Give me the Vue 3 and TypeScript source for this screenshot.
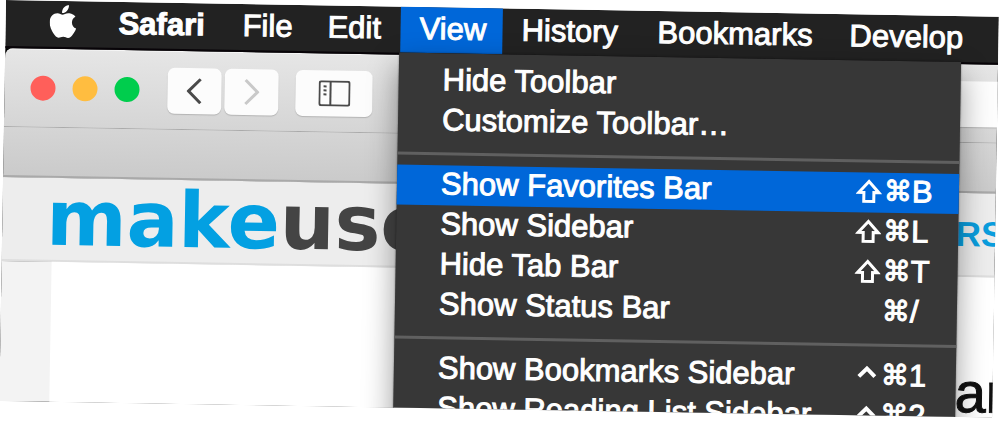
<script setup lang="ts">
interface MenuEntry {
  label: string
  mod?: 'shift' | 'control'
  key?: string
  active?: boolean
}

const leftTitles: string[] = ['Safari', 'File', 'Edit']
const rightTitles: string[] = ['History', 'Bookmarks', 'Develop']

const groups: MenuEntry[][] = [
  [{ label: 'Hide Toolbar' }, { label: 'Customize Toolbar…' }],
  [
    { label: 'Show Favorites Bar', mod: 'shift', key: 'B', active: true },
    { label: 'Show Sidebar', mod: 'shift', key: 'L' },
    { label: 'Hide Tab Bar', mod: 'shift', key: 'T' },
    { label: 'Show Status Bar', key: '/' },
  ],
  [
    { label: 'Show Bookmarks Sidebar', mod: 'control', key: '1' },
    { label: 'Show Reading List Sidebar', mod: 'control', key: '2' },
  ],
]
</script>

<template>
  <div class="screen">
    <nav class="menubar" aria-label="Application menu">
      <button class="title apple" aria-label="Apple">
        <svg width="28" height="34" viewBox="0 0 28 34" fill="#fff">
          <path d="M19 0c.3 2.200-.5 4.200-1.800 5.700-1.200 1.500-3 2.500-4.900 2.400-.3-2.100.6-4.200 1.800-5.500C15.400 1.100 17.400.2 19 0z" />
          <path d="M25.700 11.600c-2.200 1.300-3.400 3.200-3.400 5.700 0 2.900 1.700 5 4.300 6.100-.7 2.200-2 4.400-3.400 6.200-1.300 1.700-2.500 3.300-4.600 3.300-1.900 0-2.500-1.100-4.700-1.100s-3 1.100-4.800 1.100c-2 0-3.400-1.800-4.700-3.600C1.900 25.900 0 21.300 0 17.600 0 11.700 3.800 8.500 7.700 8.500c2.100 0 3.800 1.300 5.100 1.300s3.300-1.500 5.800-1.500c1 0 4.600.1 7.100 3.300z" />
        </svg>
      </button>
      <button v-for="t in leftTitles" :key="t" class="title" :class="{ app: t === 'Safari' }">{{ t }}</button>
      <div class="open">
        <button class="title view" aria-haspopup="menu" aria-expanded="true">View</button>
        <div class="menu" role="menu" aria-label="View">
          <div v-for="(group, g) in groups" :key="g" class="group" role="group">
            <button
              v-for="item in group"
              :key="item.label"
              class="item"
              :class="{ active: item.active }"
              role="menuitem"
            >
              <span>{{ item.label }}</span>
              <span v-if="item.key" class="keys">
                <span class="mod">
                  <svg v-if="item.mod === 'shift'" width="26" height="26" viewBox="0 0 26 26" fill="none" stroke="#fff" stroke-width="3" role="img" aria-label="Shift">
                    <path d="M13 3 3 14h5v9h10v-9h5z" />
                  </svg>
                  <svg v-else-if="item.mod === 'control'" width="26" height="26" viewBox="0 0 26 26" fill="none" stroke="#fff" stroke-width="4" role="img" aria-label="Control">
                    <path d="M6 14l8-8 8 8" />
                  </svg>
                </span>
                <span class="sym">⌘</span>
                <span>{{ item.key }}</span>
              </span>
            </button>
          </div>
        </div>
      </div>
      <button v-for="t in rightTitles" :key="t" class="title">{{ t }}</button>
    </nav>

    <div class="desk">
      <div class="chrome">
        <div class="toolbar">
          <div class="lights">
            <button class="light red" aria-label="Close"></button>
            <button class="light amber" aria-label="Minimize"></button>
            <button class="light green" aria-label="Zoom"></button>
          </div>
          <div class="pair">
            <button class="tool" aria-label="Back">
              <svg width="16" height="26" viewBox="0 0 16 26" fill="none" stroke="#4a4a4a" stroke-width="3"><path d="M14 1 2 13l12 12" /></svg>
            </button>
            <button class="tool" aria-label="Forward">
              <svg width="16" height="26" viewBox="0 0 16 26" fill="none" stroke="#c9c9c9" stroke-width="3"><path d="M2 1l12 12L2 25" /></svg>
            </button>
          </div>
          <button class="tool wide" aria-label="Sidebar">
            <svg width="32" height="26" viewBox="0 0 32 26" fill="none" stroke="#4a4a4a" stroke-width="2">
              <rect x="1" y="1" width="30" height="24" rx="2" />
              <path d="M12 1v24" />
              <path d="M5 6h3M5 10h3M5 14h3" />
            </svg>
          </button>
          <input class="address" type="text" aria-label="Address" />
        </div>
        <div class="tabs"></div>
      </div>
      <div class="site">
        <a class="logo" href="#"><span class="make">make</span>use</a>
        <a class="link" href="#">RS</a>
      </div>
      <main class="page">
        <div class="article"><h1>ar</h1></div>
      </main>
    </div>
  </div>
</template>

<style>
body {
  margin: 0;
  min-height: 100vh;
  background: #fff;
}
</style>

<style scoped>
.screen {
  display: flex;
  flex-direction: column;
  height: calc(100vh - 20px);
  margin: 0 1px 0 6px;
  overflow: hidden;
  transform: rotate(0.96deg);
  transform-origin: 0 0;
  font-family: "Liberation Sans", Arial, sans-serif;
}

button {
  margin: 0;
  padding: 0;
  border: 0;
  background: none;
  font: inherit;
  color: inherit;
}

.menubar {
  position: relative;
  z-index: 2;
  flex: none;
  display: grid;
  grid-template-columns: 94px 124px 85px 92px 102px 136px 192px 1fr;
  background: #222;
  border-bottom: 2px solid #080408;
  color: #fff;
  font-size: 31px;
  line-height: 44px;
}

.title {
  height: 46px;
  padding: 0 0 2px 19px;
  text-align: left;
  white-space: nowrap;
  -webkit-text-stroke: 1px currentColor;
}

.title.app {
  font-weight: bold;
}

.apple {
  display: flex;
  align-items: center;
  padding: 0 0 4px 44px;
}

.open {
  position: relative;
}

.view {
  width: 100%;
  background: #0067d9;
}

.menu {
  position: absolute;
  top: 100%;
  left: -1px;
  width: 562px;
  padding-top: 8px;
  background: #373737;
  box-shadow: 0 12px 30px rgba(0, 0, 0, 0.4), 0 0 2px rgba(0, 0, 0, 0.5);
}

.group + .group::before {
  content: "";
  display: block;
  height: 3px;
  margin: 11px 0 10px;
  background: #606060;
}

.item {
  display: flex;
  justify-content: space-between;
  width: 100%;
  height: 40px;
  padding: 0 19px 2px 44px;
  line-height: 38px;
  text-align: left;
  white-space: nowrap;
  -webkit-text-stroke: 1px currentColor;
}

.item.active {
  background: #0067d9;
}

.keys {
  display: grid;
  grid-template-columns: 28px 28px 28px;
}

.mod {
  display: flex;
  align-items: center;
}

.sym {
  font-family: "DejaVu Sans", sans-serif;
  font-size: 28px;
}

.desk {
  flex: 1;
  display: flex;
  flex-direction: column;
  min-height: 0;
  background: #000;
}

.chrome {
  border-radius: 8px 0 0 0;
  background: linear-gradient(#e6e6e6, #cacaca);
}

.toolbar {
  display: flex;
  align-items: center;
  height: 79px;
  padding-left: 26px;
  border-top: 1px solid #f6f6f6;
  border-bottom: 1px solid #aaa;
  border-radius: 8px 0 0 0;
  box-sizing: border-box;
}

.lights {
  display: flex;
  gap: 17px;
  margin-right: 28px;
}

.light {
  width: 25px;
  height: 25px;
  border-radius: 50%;
}

.red {
  background: #ff5f5a;
}

.amber {
  background: #ffbd40;
}

.green {
  background: #00cd4d;
}

.pair {
  display: flex;
  gap: 3px;
  margin-right: 17px;
}

.tool {
  display: flex;
  align-items: center;
  justify-content: center;
  width: 54px;
  height: 46px;
  border-radius: 7px;
  background: #fcfcfc;
  box-shadow: 0 1px 1px #b4b4b4;
}

.wide {
  width: 77px;
}

.address {
  flex: 1;
  height: 46px;
  margin-left: 60px;
  padding: 0 12px;
  border: 0;
  border-radius: 7px 0 0 7px;
  background: #fdfdfd;
  box-shadow: 0 1px 1px #b4b4b4;
  font: inherit;
}

.tabs {
  height: 50px;
  border-bottom: 2px solid #a9a9a9;
  box-sizing: border-box;
}

.site {
  flex: none;
  display: flex;
  justify-content: space-between;
  align-items: center;
  height: 84px;
  border-bottom: 2px solid #dedede;
  box-sizing: border-box;
  background: #ededed;
}

.logo {
  padding-left: 44px;
  color: #444;
  font-family: "DejaVu Sans", sans-serif;
  font-size: 77px;
  font-weight: bold;
  line-height: 82px;
  text-decoration: none;
}

.make {
  color: #03a0e2;
}

.link {
  margin-right: -9px;
  color: #0a9ddd;
  font-size: 35px;
  font-weight: bold;
  text-decoration: none;
}

.page {
  flex: 1;
  display: flex;
  min-height: 0;
  padding-left: 50px;
  background: #f3f3f3;
}

.article {
  flex: 1;
  display: flex;
  justify-content: flex-end;
  background: #fff;
}

h1 {
  margin: 86px -12px 0 0;
  color: #111;
  font-size: 56px;
  font-weight: normal;
  line-height: 60px;
  -webkit-text-stroke: 1px currentColor;
}
</style>
